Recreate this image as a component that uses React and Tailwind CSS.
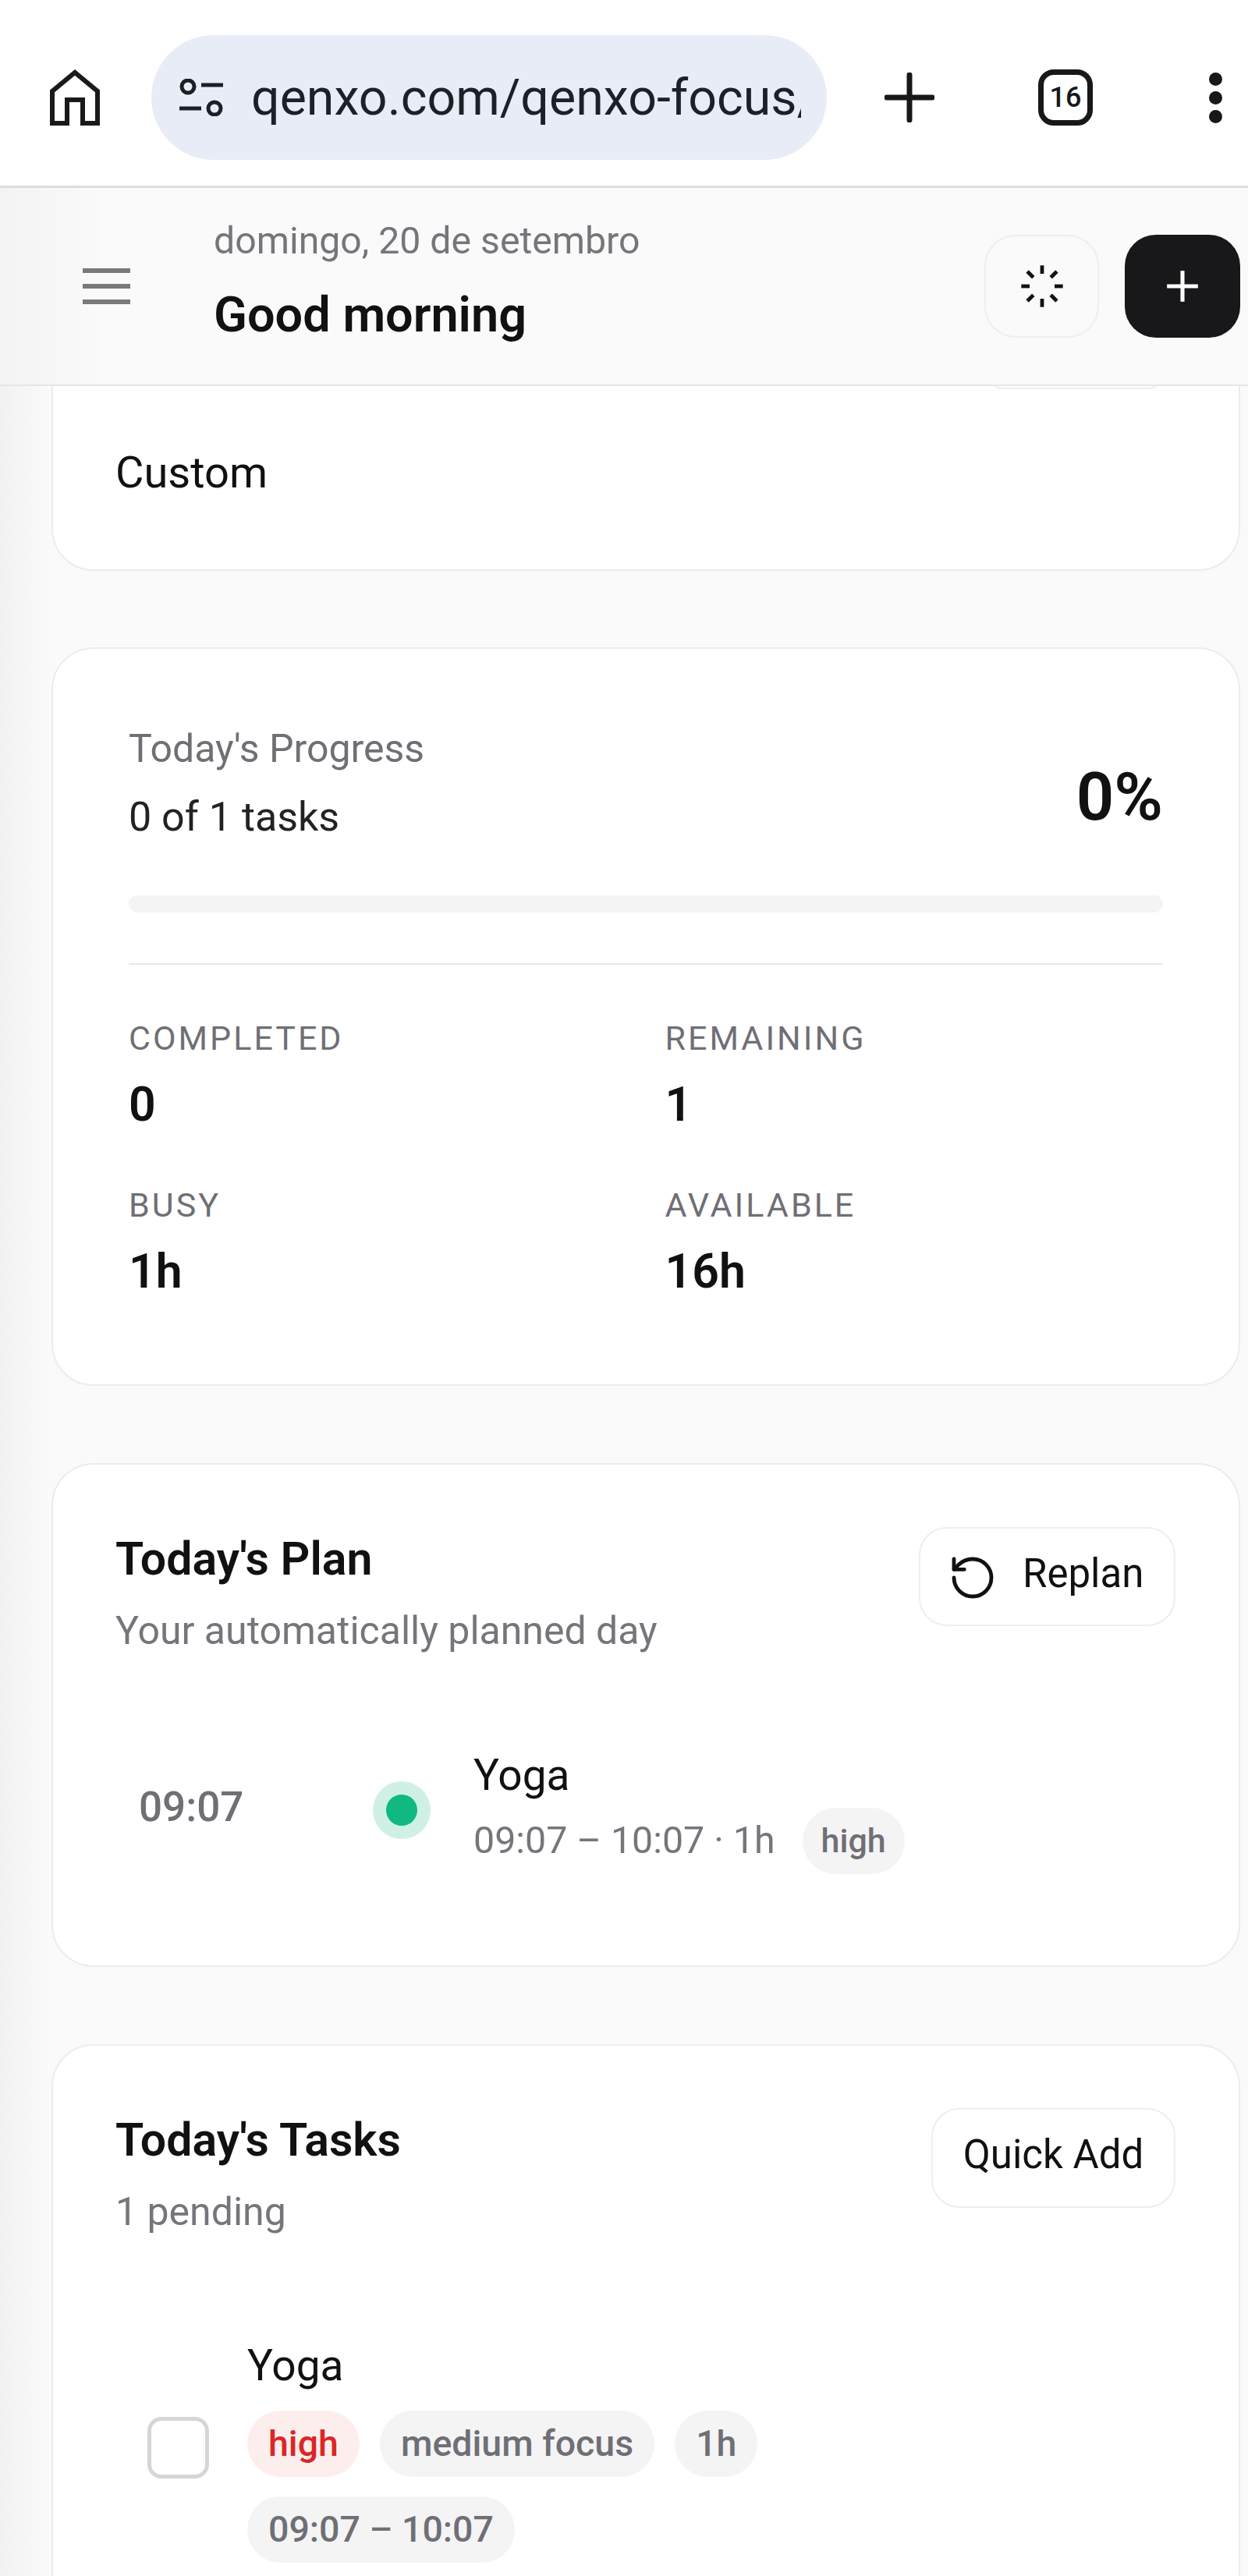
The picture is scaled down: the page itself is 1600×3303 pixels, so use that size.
import React from "react";
import { Plus, RotateCcw, Loader } from "lucide-react";

const font = "font-['Roboto','Liberation_Sans',sans-serif]";

function Card({ className = "", children }) {
  return (
    <section className={`mr-[10px] ml-[66px] rounded-[54px] border-2 border-[#ececec] bg-white ${className}`}>
      {children}
    </section>
  );
}

function Stat({ label, value }) {
  return (
    <div className="h-[214px]">
      <div className="text-[43px] leading-[48px] tracking-[3px] text-[#6f6f75]">{label}</div>
      <div className="mt-[28px] text-[60.75px] leading-[68px] font-semibold text-[#111]">{value}</div>
    </div>
  );
}

function Pill({ className = "", children }) {
  return (
    <span className={`flex h-[85px] items-center rounded-full px-[27px] text-[46.5px] font-medium ${className}`}>
      {children}
    </span>
  );
}

function BrowserBar() {
  return (
    <header className="flex h-[241px] items-center border-b-[3px] border-[#dcdcdc] bg-white pt-[12px]">
      <svg className="ml-[64px] h-[72px] w-[64px] shrink-0" viewBox="0 0 64 72" fill="none" stroke="#1a1a1a" strokeWidth="6">
        <path d="M3 69V28L32 4l29 24v41H42V39H22v30H3Z" />
      </svg>
      <div className="ml-[66px] flex h-[160px] w-[866px] shrink-0 items-center overflow-hidden rounded-full bg-[#e8ecf6] pl-[35px]">
        <svg className="h-[48px] w-[58px] shrink-0" viewBox="0 0 58 48" fill="none" stroke="#1d1f24" strokeWidth="5">
          <circle cx="12" cy="10" r="8" />
          <path d="M29 8h28" />
          <circle cx="46" cy="38" r="8" />
          <path d="M1 38h28" />
        </svg>
        <span className="ml-[35px] w-[705px] overflow-hidden text-[64.5px] whitespace-nowrap text-[#1d2026]">
          qenxo.com/qenxo-focus/
        </span>
      </div>
      <svg className="ml-[74px] h-[64px] w-[64px] shrink-0" viewBox="0 0 64 64" stroke="#17181a" strokeWidth="7" strokeLinecap="round">
        <path d="M32 3v58M3 32h58" />
      </svg>
      <div className="ml-[133px] flex h-[72px] w-[70px] shrink-0 items-center justify-center rounded-[20px] border-[7px] border-[#17181a] text-[36px] font-medium text-[#17181a]">
        16
      </div>
      <div className="ml-[149px] flex shrink-0 flex-col gap-[7px]">
        <span className="h-[17px] w-[17px] rounded-full bg-[#17181a]" />
        <span className="h-[17px] w-[17px] rounded-full bg-[#17181a]" />
        <span className="h-[17px] w-[17px] rounded-full bg-[#17181a]" />
      </div>
    </header>
  );
}

function AppHeader() {
  return (
    <div className="relative z-10 flex h-[254px] items-center border-b-2 border-[#e6e6e6] bg-[#fafafa] bg-gradient-to-r from-[#f3f3f3] to-[#fafafa] to-[8%] pr-[10px]">
      <div className="ml-[106px] flex w-[61px] shrink-0 flex-col gap-[14px]">
        <span className="h-[6px] bg-[#7a7a7a]" />
        <span className="h-[6px] bg-[#7a7a7a]" />
        <span className="h-[6px] bg-[#7a7a7a]" />
      </div>
      <div className="ml-[107px] flex-1 pb-[13px]">
        <div className="text-[48.2px] leading-[56px] text-[#75757b]">domingo, 20 de setembro</div>
        <div className="mt-[31px] text-[63px] leading-[72px] font-semibold text-[#111]">Good morning</div>
      </div>
      <div className="flex h-[132px] w-[147px] items-center justify-center rounded-[40px] border-2 border-[#eeeeee] bg-[#fafafa]">
        <Loader size={64} strokeWidth={1.8} strokeLinecap="butt" color="#111" />
      </div>
      <div className="ml-[33px] flex h-[132px] w-[148px] items-center justify-center rounded-[40px] bg-[#18181a]">
        <Plus size={68} strokeWidth={1.8} strokeLinecap="butt" color="#fff" />
      </div>
    </div>
  );
}

export default function App() {
  return (
    <div className={`h-[3303px] w-[1600px] overflow-hidden bg-[#fafafa] ${font}`}>
      <BrowserBar />
      <AppHeader />
      <main className="bg-gradient-to-r from-[#f1f1f1] to-[#fafafa] to-[4%]">
        <Card className="-mt-[80px] h-[317px] pt-[48px] pl-[80px]">
          <div className="ml-[1120px] h-[34px] w-[222px] rounded-[36px] border-2 border-[#eeeeee]" />
          <div className="mt-[77px] text-[56px] leading-[60px] text-[#111]">Custom</div>
        </Card>

        <Card className="mt-[98px] h-[947px] px-[97px] pt-[98px]">
          <div className="flex items-center justify-between">
            <div>
              <div className="text-[50px] leading-[60px] text-[#6f6f75]">Today's Progress</div>
              <div className="mt-[28px] text-[52px] leading-[60px] text-[#222]">0 of 1 tasks</div>
            </div>
            <div className="mt-[36px] text-[85px] leading-[90px] font-semibold text-[#111]">0%</div>
          </div>
          <div className="mt-[70px] h-[22px] rounded-full bg-[#f4f4f5]" />
          <div className="mt-[65px] h-[2px] bg-[#e8e8e8]" />
          <div className="mt-[70px] grid grid-cols-2 gap-x-[49px]">
            <Stat label="COMPLETED" value="0" />
            <Stat label="REMAINING" value="1" />
            <Stat label="BUSY" value="1h" />
            <Stat label="AVAILABLE" value="16h" />
          </div>
        </Card>

        <Card className="mt-[99px] h-[646px] pt-[80px] pr-[81px] pl-[80px]">
          <div className="flex items-start justify-between">
            <div>
              <div className="mt-[7px] text-[59px] leading-[68px] font-semibold text-[#111]">Today's Plan</div>
              <div className="mt-[28px] text-[50px] leading-[60px] text-[#75757b]">Your automatically planned day</div>
            </div>
            <button className="flex h-[127px] w-[329px] items-center gap-[32px] rounded-[36px] border-2 border-[#eeeeee] pb-[6px] pl-[35px] text-[51px] text-[#111]">
              <RotateCcw size={64} strokeWidth={1.8} className="mt-[8px]" />
              Replan
            </button>
          </div>
          <div className="mt-[125px] flex items-center pl-[30px]">
            <div className="mb-[14px] w-[300px] text-[53px] font-medium text-[#6f6f75]">09:07</div>
            <div className="mb-[8px] flex h-[74px] w-[74px] items-center justify-center rounded-full bg-[#cff1e5]">
              <div className="h-[40px] w-[40px] rounded-full bg-[#10b981]" />
            </div>
            <div className="ml-[55px]">
              <div className="text-[55px] leading-[60px] text-[#111]">Yoga</div>
              <div className="mt-[12px] flex items-center">
                <span className="text-[48.3px] text-[#75757b]">09:07 – 10:07 · 1h</span>
                <Pill className="ml-[35px] h-[81px] bg-[#f4f4f5] !px-[24px] !text-[43px] text-[#6f6f75]">high</Pill>
              </div>
            </div>
          </div>
        </Card>

        <Card className="mt-[99px] h-[800px] pt-[80px] pr-[81px] pl-[80px]">
          <div className="flex items-start justify-between">
            <div>
              <div className="mt-[7px] text-[59px] leading-[68px] font-semibold text-[#111]">Today's Tasks</div>
              <div className="mt-[28px] text-[50px] leading-[60px] text-[#75757b]">1 pending</div>
            </div>
            <button className="h-[128px] w-[313px] rounded-[36px] border-2 border-[#eeeeee] pb-[8px] text-[51px] text-[#111]">
              Quick Add
            </button>
          </div>
          <div className="mt-[137px] flex items-center pl-[41px]">
            <div className="-mt-[13px] h-[79px] w-[79px] rounded-[18px] border-[5px] border-[#d6d6d6]" />
            <div className="ml-[49px]">
              <div className="text-[55px] leading-[60px] text-[#111]">Yoga</div>
              <div className="mt-[28px] flex w-[700px] flex-wrap gap-x-[26px] gap-y-[25px]">
                <Pill className="bg-[#fdeeee] text-[#dc2626]">high</Pill>
                <Pill className="bg-[#f4f4f5] text-[#6f6f75]">medium focus</Pill>
                <Pill className="bg-[#f4f4f5] text-[#6f6f75]">1h</Pill>
                <Pill className="bg-[#f4f4f5] text-[#6f6f75]">09:07 – 10:07</Pill>
              </div>
            </div>
          </div>
        </Card>
      </main>
    </div>
  );
}
